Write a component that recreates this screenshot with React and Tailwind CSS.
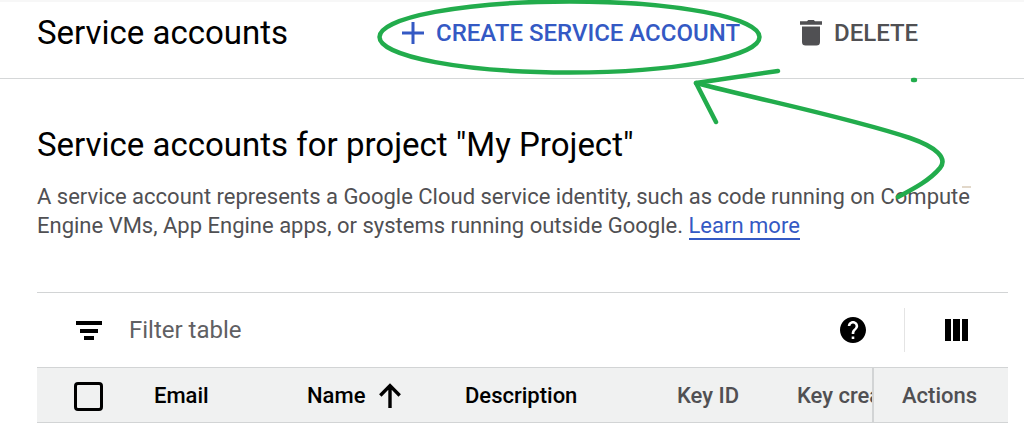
import React, { useState } from 'react';

const PlusIcon = ({ className }) => (
  <svg viewBox="0 0 22 22" className={className} fill="currentColor" aria-hidden="true">
    <path d="M9.500 0h3v9.500H22v3h-9.500V22h-3v-9.500H0v-3h9.500z" />
  </svg>
);

const TrashIcon = ({ className }) => (
  <svg viewBox="0 0 22 26" className={className} fill="currentColor" aria-hidden="true">
    <path d="M7 1.2 8.2 0h5.6L15 1.2h7v3.600H0V1.2zM2 6.600h18V22a3.600 3.600 0 0 1-3.600 3.600H5.600A3.600 3.600 0 0 1 2 22z" />
  </svg>
);

const FilterIcon = ({ className }) => (
  <svg viewBox="0 0 26 19" className={className} fill="currentColor" aria-hidden="true">
    <path d="M0 0h26v4H0zM4 8h18v4H4zM8 15h10v4H8z" />
  </svg>
);

const HelpIcon = ({ className }) => (
  <svg viewBox="2 2 20 20" className={className} fill="currentColor" aria-hidden="true">
    <path d="M12 2C6.480 2 2 6.480 2 12s4.480 10 10 10 10-4.480 10-10S17.520 2 12 2zm1 17h-2v-2h2v2zm2.070-7.750l-.9.920C13.450 12.900 13 13.500 13 15h-2v-.5c0-1.100.450-2.100 1.170-2.830l1.240-1.260c.370-.360.590-.860.590-1.410 0-1.100-.9-2-2-2s-2 .9-2 2H8c0-2.210 1.790-4 4-4s4 1.790 4 4c0 .880-.360 1.680-.930 2.250z" />
  </svg>
);

const ColumnsIcon = ({ className }) => (
  <svg viewBox="0 0 23 22" className={className} fill="currentColor" aria-hidden="true">
    <path d="M0 0h6v22H0zM8 0h7v22H8zM17 0h6v22h-6z" />
  </svg>
);

const ArrowUpIcon = ({ className }) => (
  <svg viewBox="0 0 22 25" className={className} fill="none" stroke="currentColor" strokeWidth="3.400" aria-hidden="true">
    <path d="M11 25V3M1.300 12.500 11 2.600l9.700 9.900" />
  </svg>
);

// Hand-drawn marker pointing at the create button
const Annotation = () => (
  <svg
    viewBox="0 0 1024 210"
    className="absolute left-0 top-0 w-[1024px] h-[210px] max-w-none pointer-events-none"
    fill="none"
    stroke="#22ac4c"
    strokeWidth="4.500"
    strokeLinecap="round"
    strokeLinejoin="round"
    aria-hidden="true"
  >
    <ellipse cx="569.500" cy="37" rx="190" ry="35.500" />
    <path d="M778 71 696 83 716 122" />
    <path d="M696 83C770 102 850 118 910 138C936 147 948 158 940 168C930 180 915 188 898 197" />
    <path d="M913 80h2" />
    <path d="M962 187h9" stroke="#d9cbb8" strokeWidth="1.500" strokeLinecap="butt" />
  </svg>
);

const App = () => {
  const [filter, setFilter] = useState('');
  const [allSelected, setAllSelected] = useState(false);

  return (
    <div className="relative min-h-screen overflow-hidden bg-white text-black font-['Roboto',sans-serif]">
      {/* Page toolbar */}
      <header className="flex items-center h-[79px] pl-[37px] pb-[14px] border-t-2 border-t-[#f7f7f7] border-b border-b-[#d5d7d8]">
        <h1 className="w-[365px] text-[33px] leading-10 whitespace-nowrap">Service accounts</h1>
        <button type="button" className="flex items-center gap-3 text-2xl font-medium text-[#3459c4] whitespace-nowrap">
          <PlusIcon className="w-[22px] h-[22px]" />
          CREATE SERVICE ACCOUNT
        </button>
        <button type="button" className="flex items-center gap-3 ml-15 text-2xl font-medium text-[#505053]">
          <TrashIcon className="w-[22px] h-[26px]" />
          DELETE
        </button>
      </header>

      <main className="pl-[37px] pr-4 pt-[46px]">
        <h2 className="text-[33px] leading-10">Service accounts for project "My Project"</h2>
        <p className="mt-[17px] text-[22px] leading-[29px] text-[#505053]">
          A service account represents a Google Cloud service identity, such as code running on Compute
          Engine VMs, App Engine apps, or systems running outside Google.{' '}
          <a href="#learn-more" className="text-[#3459c4] border-b-2 border-[#3459c4]">Learn more</a>
        </p>

        {/* Filter bar */}
        <div className="flex items-center mt-[52px] h-[75px] pl-[39px] pr-10 border-t border-[#d2d4d5]">
          <FilterIcon className="w-[26px] h-[19px]" />
          <input
            type="text"
            aria-label="Filter table"
            placeholder="Filter table"
            value={filter}
            onChange={(e) => setFilter(e.target.value)}
            className="flex-1 min-w-0 ml-[27px] text-2xl outline-none placeholder:text-[#606063]"
          />
          <button type="button" aria-label="Help">
            <HelpIcon className="w-[26px] h-[26px]" />
          </button>
          <div className="w-px h-11 ml-[38px] mr-10 bg-[#e4e4e4]" />
          <button type="button" aria-label="Column display options">
            <ColumnsIcon className="w-[23px] h-[22px]" />
          </button>
        </div>

        <table className="w-full table-fixed text-left text-[22px] border-y border-[#d2d4d5] bg-[#f0f1f1]">
          <thead>
            <tr className="h-[55px]">
              <th className="w-[117px] pl-[37px] pt-[3px]">
                <input
                  type="checkbox"
                  aria-label="Select all service accounts"
                  checked={allSelected}
                  onChange={() => setAllSelected(!allSelected)}
                  className="block appearance-none w-[29px] h-[29px] rounded-sm border-3 border-black checked:bg-black"
                />
              </th>
              <th className="w-[153px] font-medium">Email</th>
              <th className="w-[158px] font-medium">
                <span className="flex items-center gap-[14px]">
                  Name
                  <ArrowUpIcon className="w-[22px] h-[25px]" />
                </span>
              </th>
              <th className="w-[212px] font-medium">Description</th>
              <th className="w-[120px] font-medium text-[#505053]">Key ID</th>
              <th className="font-medium text-[#505053] whitespace-nowrap overflow-hidden">Key crea</th>
              <th className="w-[135px] pl-7 font-medium text-[#505053] border-l-2 border-[#d2d4d5]">Actions</th>
            </tr>
          </thead>
        </table>
      </main>

      <Annotation />
    </div>
  );
};

export default App;
